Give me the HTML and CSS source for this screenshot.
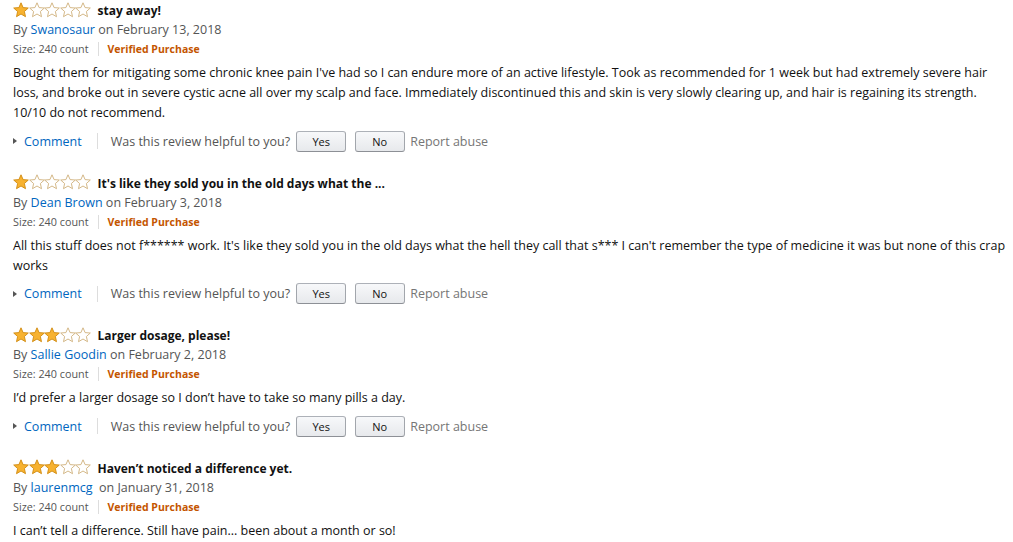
FILE: index.html
```html
<!DOCTYPE html>
<html lang="en">
<head>
  <meta charset="UTF-8" />
  <title>Customer Reviews</title>
  <link rel="stylesheet" href="styles.css">
</head>
<body>
  <svg width="0" height="0" class="defs">
    <defs>
      <symbol id="star-full" viewBox="0 0 16 16">
        <polygon points="8,0.8 10.1,5.6 15.3,6 11.4,9.5 12.5,14.7 8,12 3.5,14.7 4.6,9.5 0.7,6 5.9,5.6" fill="#f7b230" stroke="#d08a10" stroke-width="0.9" stroke-linejoin="round"/>
      </symbol>
      <symbol id="star-empty" viewBox="0 0 16 16">
        <polygon points="8,0.8 10.1,5.6 15.3,6 11.4,9.5 12.5,14.7 8,12 3.5,14.7 4.6,9.5 0.7,6 5.9,5.6" fill="#fff" stroke="#cfb07a" stroke-width="0.9" stroke-linejoin="round"/>
      </symbol>
    </defs>
  </svg>

  <div class="reviews">
    <div class="review">
      <div class="review-head">
        <span class="stars">
          <svg><use href="#star-full"/></svg><svg><use href="#star-empty"/></svg><svg><use href="#star-empty"/></svg><svg><use href="#star-empty"/></svg><svg><use href="#star-empty"/></svg>
        </span>
        <span class="review-title">stay away!</span>
      </div>
      <div class="byline">By <a href="#">Swanosaur</a> on February 13, 2018</div>
      <div class="meta"><span>Size: 240 count</span><span class="sep"></span><span class="verified">Verified Purchase</span></div>
      <p class="review-text">Bought them for mitigating some chronic knee pain I've had so I can endure more of an active lifestyle. Took as recommended for 1 week but had extremely severe hair loss, and broke out in severe cystic acne all over my scalp and face. Immediately discontinued this and skin is very slowly clearing up, and hair is regaining its strength. 10/10 do not recommend.</p>
      <div class="actions">
        <span class="caret"></span><a href="#" class="comment">Comment</a><span class="sep tall"></span>
        <span class="helpful">Was this review helpful to you?</span>
        <button>Yes</button><button>No</button>
        <span class="report">Report abuse</span>
      </div>
    </div>

    <div class="review">
      <div class="review-head">
        <span class="stars">
          <svg><use href="#star-full"/></svg><svg><use href="#star-empty"/></svg><svg><use href="#star-empty"/></svg><svg><use href="#star-empty"/></svg><svg><use href="#star-empty"/></svg>
        </span>
        <span class="review-title">It's like they sold you in the old days what the ...</span>
      </div>
      <div class="byline">By <a href="#">Dean Brown</a> on February 3, 2018</div>
      <div class="meta"><span>Size: 240 count</span><span class="sep"></span><span class="verified">Verified Purchase</span></div>
      <p class="review-text">All this stuff does not f****** work. It's like they sold you in the old days what the hell they call that s*** I can't remember the type of medicine it was but none of this crap works</p>
      <div class="actions">
        <span class="caret"></span><a href="#" class="comment">Comment</a><span class="sep tall"></span>
        <span class="helpful">Was this review helpful to you?</span>
        <button>Yes</button><button>No</button>
        <span class="report">Report abuse</span>
      </div>
    </div>

    <div class="review">
      <div class="review-head">
        <span class="stars">
          <svg><use href="#star-full"/></svg><svg><use href="#star-full"/></svg><svg><use href="#star-full"/></svg><svg><use href="#star-empty"/></svg><svg><use href="#star-empty"/></svg>
        </span>
        <span class="review-title">Larger dosage, please!</span>
      </div>
      <div class="byline">By <a href="#">Sallie Goodin</a> on February 2, 2018</div>
      <div class="meta"><span>Size: 240 count</span><span class="sep"></span><span class="verified">Verified Purchase</span></div>
      <p class="review-text">I’d prefer a larger dosage so I don’t have to take so many pills a day.</p>
      <div class="actions">
        <span class="caret"></span><a href="#" class="comment">Comment</a><span class="sep tall"></span>
        <span class="helpful">Was this review helpful to you?</span>
        <button>Yes</button><button>No</button>
        <span class="report">Report abuse</span>
      </div>
    </div>

    <div class="review">
      <div class="review-head">
        <span class="stars">
          <svg><use href="#star-full"/></svg><svg><use href="#star-full"/></svg><svg><use href="#star-full"/></svg><svg><use href="#star-empty"/></svg><svg><use href="#star-empty"/></svg>
        </span>
        <span class="review-title">Haven’t noticed a difference yet.</span>
      </div>
      <div class="byline">By <a href="#">laurenmcg</a> &nbsp;on January 31, 2018</div>
      <div class="meta"><span>Size: 240 count</span><span class="sep"></span><span class="verified">Verified Purchase</span></div>
      <p class="review-text">I can’t tell a difference. Still have pain... been about a month or so!</p>
    </div>
  </div>
</body>
</html>
```

FILE: styles.css
```css
:root {
  --text: #111111;
  --muted: #555555;
  --link: #0066c0;
  --orange: #c45500;
  --rule: #dddddd;
}
* { box-sizing: border-box; margin: 0; padding: 0; }
body {
  font-family: 'Open Sans', 'Noto Sans', sans-serif;
  font-size: 12.5px;
  color: var(--text);
  background: #fff;
  padding: 1px 0 0 13px;
}
.defs { position: absolute; }
a { color: var(--link); text-decoration: none; }

.review { margin-bottom: 21.5px; }
.review-head {
  display: flex;
  align-items: center;
  height: 19px;
}
.stars { display: flex; margin-right: 7px; margin-top: -2px; }
.stars svg { width: 16px; height: 16px; margin-right: -0.5px; }
.review-title { font-size: 12px; font-weight: 700; color: var(--text); }

.byline {
  color: var(--muted);
  line-height: 19px;
}
.meta {
  display: flex;
  align-items: center;
  font-size: 10.8px;
  line-height: 20px;
  color: var(--muted);
}
.meta .sep {
  width: 1px;
  height: 14px;
  background: var(--rule);
  margin: 0 9px;
}
.verified { color: var(--orange); font-weight: 700; font-size: 10.5px; }

.review-text {
  margin-top: 4px;
  line-height: 20px;
}

.actions {
  display: flex;
  align-items: center;
  margin-top: 7px;
  height: 22px;
  color: var(--muted);
}
.caret {
  width: 0;
  height: 0;
  border-left: 4px solid #555;
  border-top: 3.5px solid transparent;
  border-bottom: 3.5px solid transparent;
  margin: 0 7px 0 0;
}
.actions .sep {
  width: 1px;
  height: 16px;
  background: var(--rule);
  margin: 0 13px 0 15px;
}
.helpful { margin-right: 6px; }
.actions button {
  font-family: inherit;
  font-size: 11px;
  color: var(--text);
  width: 50px;
  height: 21px;
  border: 1px solid #adb1b8;
  border-color: #adb1b8 #a2a6ac #8d9096;
  border-radius: 3px;
  background: linear-gradient(to bottom, #f7f8fa, #e7e9ec);
  margin-right: 8.5px;
}
.report { color: #767676; margin-left: -3px; }
```
